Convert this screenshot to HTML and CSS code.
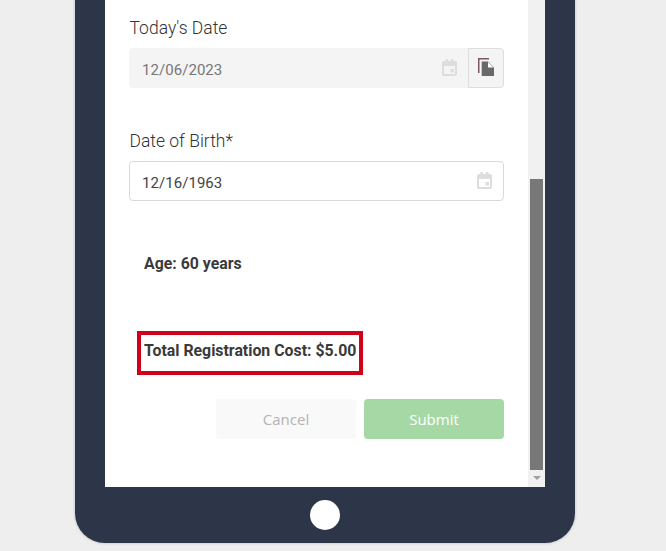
FILE: index.html
```html
<!DOCTYPE html>
<html lang="en">
<head>
<meta charset="utf-8">
<title>Registration</title>
<link rel="stylesheet" href="styles.css">
</head>
<body>
<div class="device">
  <div class="screen">
    <main class="content">
      <label class="label label-first">Today's Date</label>
      <div class="field-row">
        <div class="input input-disabled">
          <span>12/06/2023</span>
          <svg class="cal" viewBox="0 0 15 17"><path d="M2 2h1.500V0h2.500v2h3V0h2.500v2H13a2 2 0 0 1 2 2v11a2 2 0 0 1-2 2H2a2 2 0 0 1-2-2V4a2 2 0 0 1 2-2zm0 5v8h11V7zM8.500 10H12v3.500H8.500z" fill-rule="evenodd"/></svg>
        </div>
        <button class="copy" type="button" aria-label="Copy">
          <svg viewBox="0 0 16 18" width="16" height="18"><path d="M0 0h11v1.500H1.500V15H0z" fill="#7a5a5e"/><path d="M3.700 3.500H10l6 6V18H3.700z" fill="#696969"/><path d="M10 4v5.500h5.500z" fill="#ffffff"/></svg>
        </button>
      </div>
      <label class="label label-second">Date of Birth*</label>
      <div class="input input-active">
        <span>12/16/1963</span>
        <svg class="cal" viewBox="0 0 15 17"><path d="M2 2h1.500V0h2.500v2h3V0h2.500v2H13a2 2 0 0 1 2 2v11a2 2 0 0 1-2 2H2a2 2 0 0 1-2-2V4a2 2 0 0 1 2-2zm0 5v8h11V7zM8.500 10H12v3.500H8.500z" fill-rule="evenodd"/></svg>
      </div>
      <p class="age">Age: 60 years</p>
      <p class="total">Total Registration Cost: $5.00</p>
      <div class="actions">
        <button class="btn btn-cancel" type="button">Cancel</button>
        <button class="btn btn-submit" type="button">Submit</button>
      </div>
    </main>
    <div class="scrollbar">
      <div class="thumb"></div>
      <div class="arrow"></div>
    </div>
  </div>
  <div class="home-bar"><div class="home"></div></div>
</div>
</body>
</html>
```
FILE: styles.css
```css
* { box-sizing: border-box; }
html, body { margin: 0; height: 100%; overflow: hidden; }
body {
  background: #eeeeee;
  font-family: Roboto, "Liberation Sans", sans-serif;
  color: #333;
}
.device {
  width: 500px;
  height: 543px;
  margin-left: 75px;
  padding: 0 30px;
  background: #2c3648;
  border-radius: 0 0 30px 30px;
  box-shadow: 0 0 3px rgba(0,0,0,.25);
  display: flex;
  flex-direction: column;
}
.screen {
  height: 487px;
  display: flex;
  background: #fff;
}
.content {
  flex: 1;
  padding: 0 24px;
}
.label {
  display: block;
  font-weight: 300;
  font-size: 17.500px;
  line-height: 20px;
  color: #333;
  padding-left: 0.500px;
}
.label-first { padding-top: 18px; margin-bottom: 10px; }
.label-second { margin-top: 43px; margin-bottom: 10px; }
.field-row { display: flex; height: 40px; }
.input {
  flex: 1;
  height: 40px;
  display: flex;
  align-items: center;
  justify-content: space-between;
  font-size: 15px;
  font-weight: 400;
  padding: 0 11px 0 13px;
  border-radius: 4px;
}
.input span { padding-top: 4px; letter-spacing: .05px; }
.input-disabled {
  background: #f4f4f4;
  color: #777;
  border-radius: 4px 0 0 4px;
}
.input-active {
  border: 1px solid #d9d9d9;
  color: #444;
  padding-left: 12px;
}
.input-active span { padding-top: 3px; }
.cal { width: 15px; height: 17px; margin-top: -2px; fill: #dddddd; }
.copy {
  width: 36px;
  height: 40px;
  padding: 0 1px 2px 0;
  background: #f4f4f4;
  border: 1px solid #dddddd;
  border-radius: 0 4px 4px 0;
  display: flex;
  align-items: center;
  justify-content: center;
}
.age, .total {
  margin: 0;
  font-size: 15.850px;
  font-weight: 700;
  line-height: 20px;
  color: #3a3a3a;
}
.age { margin: 53px 0 0 15px; }
.total {
  width: 226px;
  height: 44px;
  margin: 57px 0 0 8px;
  padding: 6px 0 0 3px;
  border: 4px solid #d0021b;
  white-space: nowrap;
}
.actions {
  display: flex;
  justify-content: flex-end;
  gap: 8px;
  margin-top: 24px;
}
.btn {
  width: 140px;
  height: 40px;
  border: 0;
  border-radius: 4px;
  font-family: "Open Sans", sans-serif;
  font-size: 15px;
  font-weight: 400;
}
.btn-cancel { background: #f9f9f9; color: #b3b3b3; }
.btn-submit { background: #a5d8a5; color: #fff; font-weight: 500; }
.scrollbar {
  width: 17px;
  background: #f1f1f1;
  padding: 179px 2px 0;
  display: flex;
  flex-direction: column;
  align-items: center;
}
.thumb { width: 13px; height: 291px; background: #787878; }
.arrow {
  margin-top: 6px;
  width: 0;
  height: 0;
  border: 4px solid transparent;
  border-top: 4px solid #a0a0a0;
  border-bottom: 0;
}
.home-bar {
  flex: 1;
  display: flex;
  align-items: center;
  justify-content: center;
}
.home { width: 30px; height: 30px; border-radius: 50%; background: #fff; }
```
